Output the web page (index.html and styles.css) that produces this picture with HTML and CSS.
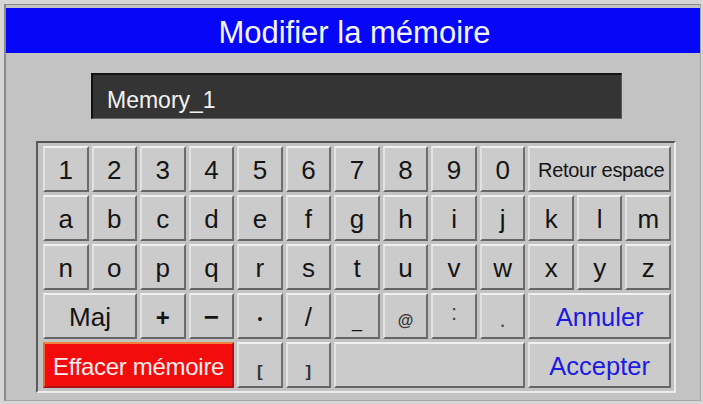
FILE: index.html
```html
<!DOCTYPE html>
<html lang="fr">
<head>
<meta charset="utf-8">
<title>Modifier la mémoire</title>
<link rel="stylesheet" href="styles.css">
</head>
<body>
<div class="window">
  <header class="title">Modifier la mémoire</header>
  <div class="field"><span class="field-text">Memory_1</span></div>
  <div class="keyboard">
    <div class="key">1</div>
    <div class="key">2</div>
    <div class="key">3</div>
    <div class="key">4</div>
    <div class="key">5</div>
    <div class="key">6</div>
    <div class="key">7</div>
    <div class="key">8</div>
    <div class="key">9</div>
    <div class="key">0</div>
    <div class="key span-3 label">Retour espace</div>

    <div class="key">a</div>
    <div class="key">b</div>
    <div class="key">c</div>
    <div class="key">d</div>
    <div class="key">e</div>
    <div class="key">f</div>
    <div class="key">g</div>
    <div class="key">h</div>
    <div class="key">i</div>
    <div class="key">j</div>
    <div class="key">k</div>
    <div class="key">l</div>
    <div class="key">m</div>

    <div class="key">n</div>
    <div class="key">o</div>
    <div class="key">p</div>
    <div class="key">q</div>
    <div class="key">r</div>
    <div class="key">s</div>
    <div class="key">t</div>
    <div class="key">u</div>
    <div class="key">v</div>
    <div class="key">w</div>
    <div class="key">x</div>
    <div class="key">y</div>
    <div class="key">z</div>

    <div class="key span-2">Maj</div>
    <div class="key sym-plus">+</div>
    <div class="key sym-minus">−</div>
    <div class="key sym-dot">•</div>
    <div class="key">/</div>
    <div class="key sym-under">_</div>
    <div class="key sym-at">@</div>
    <div class="key sym-colon">:</div>
    <div class="key sym-period">.</div>
    <div class="key span-3 blue">Annuler</div>

    <div class="key span-4 red">Effacer mémoire</div>
    <div class="key sym-bracket">[</div>
    <div class="key sym-bracket">]</div>
    <div class="key span-4"></div>
    <div class="key span-3 blue">Accepter</div>
  </div>
</div>
</body>
</html>
```

FILE: styles.css
```css
html, body {
  margin: 0;
  padding: 0;
}

body {
  background: #d6d6d6;
  font-family: "Liberation Sans", Arial, sans-serif;
}

.window {
  box-sizing: border-box;
  width: 697px;
  height: 397px;
  margin: 4px 2px 3px 4px;
  background: #c3c3c3;
  border-top: 1px solid #8c8c8c;
  border-left: 2px solid #8a8a8a;
  border-right: 1px solid #a6a6a6;
  border-bottom: 1px solid #a6a6a6;
  padding-top: 3px;
  display: flex;
  flex-direction: column;
}

.title {
  height: 45px;
  background: #0606f8;
  color: #f4f4ff;
  font-size: 31px;
  display: flex;
  align-items: center;
  justify-content: center;
  padding-top: 4px;
  box-sizing: border-box;
  padding-left: 3px;
}

.field {
  box-sizing: border-box;
  width: 531px;
  height: 46px;
  margin: 20px 0 0 85px;
  background: #343434;
  border-top: 2px solid #121212;
  border-left: 2px solid #121212;
  border-right: 1px solid #5a5a5a;
  border-bottom: 1px solid #6a6a6a;
  display: flex;
  align-items: center;
  padding: 7px 0 0 14px;
}

.field-text {
  color: #f2f2f2;
  font-size: 23px;
}

.keyboard {
  box-sizing: border-box;
  width: 640px;
  height: 252px;
  margin: 22px 0 0 30px;
  border-top: 2px solid #555555;
  border-left: 2px solid #5a5a5a;
  border-right: 2px solid #ececec;
  border-bottom: 2px solid #ececec;
  padding: 3px 3px 2px 5px;
  display: grid;
  grid-template-columns: repeat(13, 1fr);
  grid-auto-rows: 46px;
  gap: 3px;
}

.key {
  box-sizing: border-box;
  background: #cbcbcb;
  border-top: 2px solid #f0f0f0;
  border-left: 2px solid #e2e2e2;
  border-right: 2px solid #6c6c6c;
  border-bottom: 2px solid #666666;
  color: #141414;
  font-size: 26px;
  display: flex;
  align-items: center;
  justify-content: center;
  padding-top: 3px;
  white-space: nowrap;
  overflow: hidden;
}

.span-2 { grid-column: span 2; }
.span-3 { grid-column: span 3; }
.span-4 { grid-column: span 4; }

.label {
  font-size: 20px;
  letter-spacing: -0.3px;
  padding-left: 3px;
}

.blue {
  color: #1a1ae2;
  font-size: 25.5px;
}

.red {
  background: #f20c0c;
  border-top: 2px solid #f0823c;
  border-left: 2px solid #ec6a32;
  border-right: 2px solid #b01010;
  border-bottom: 2px solid #a81414;
  color: #fbeeee;
  font-size: 24px;
  letter-spacing: -0.3px;
}

.sym-plus {
  font-weight: bold;
  font-size: 24px;
}

.sym-minus {
  font-weight: bold;
  font-size: 26px;
}

.sym-dot {
  font-size: 14px;
  padding-top: 5px;
}

.sym-under {
  font-size: 18px;
  padding-top: 10px;
}

.sym-at {
  font-size: 16px;
  font-weight: bold;
  padding-top: 9px;
  color: #333333;
}

.sym-colon {
  font-size: 22px;
  padding-top: 0;
  padding-bottom: 6px;
  color: #444444;
}

.sym-period {
  font-size: 22px;
  padding-top: 8px;
  color: #444444;
}

.sym-bracket {
  font-size: 17px;
  font-weight: bold;
  padding-top: 14px;
  color: #333333;
}
```
